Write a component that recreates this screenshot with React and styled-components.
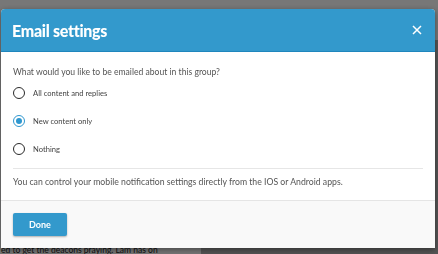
import React, { useState } from "react";
import styled, { createGlobalStyle } from "styled-components";

const GlobalStyle = createGlobalStyle`
  html, body {
    margin: 0;
    padding: 0;
    width: 438px;
    height: 254px;
    overflow: hidden;
  }
  body {
    font-family: Lato, "Liberation Sans", sans-serif;
  }
`;

const Page = styled.div`
  display: flex;
  flex-direction: column;
  width: 438px;
  height: 254px;
  background: #aaaaaa;
`;

const PageTop = styled.div`
  height: 40px;
  background: #eeeeee;
`;

const PageRow = styled.div`
  flex: 1;
  display: flex;
`;

const PageColumn = styled.div`
  width: 201px;
  background: #eeeeee;
  display: flex;
  flex-direction: column;
  justify-content: flex-end;
  overflow: hidden;
`;

const PageText = styled.p`
  margin: 0 0 0 1px;
  white-space: nowrap;
  font-size: 8.5px;
  line-height: 8px;
  color: #222;
`;

const Overlay = styled.div`
  position: fixed;
  inset: 0;
  background: rgba(0, 0, 0, 0.5);
`;

const Modal = styled.div`
  position: fixed;
  left: 1px;
  top: 9px;
  width: 434px;
  background: #fff;
  border-radius: 4px 4px 0 0;
  box-shadow: 0 2px 6px rgba(0, 0, 0, 0.4);
  overflow: hidden;
`;

const Header = styled.div`
  display: flex;
  align-items: center;
  justify-content: space-between;
  height: 42px;
  padding: 0 13px 0 11px;
  background: #3399cc;
  border-bottom: 1px solid #1f86bd;
`;

const Title = styled.h2`
  margin: 0;
  font-size: 16px;
  letter-spacing: -0.3px;
  font-weight: 900;
  color: #fff;
`;

const CloseButton = styled.button`
  display: flex;
  padding: 0;
  border: 0;
  background: none;
  cursor: pointer;
`;

const Body = styled.div`
  padding: 14px 12px 11px;
`;

const Question = styled.p`
  margin: 0;
  font-size: 8.6px;
  line-height: 13px;
  color: #555;
`;

const Options = styled.div`
  display: flex;
  flex-direction: column;
`;

const Option = styled.label`
  display: flex;
  align-items: center;
  gap: 8px;
  height: 28px;
  cursor: pointer;
`;

const RadioCircle = styled.span`
  box-sizing: border-box;
  display: flex;
  align-items: center;
  justify-content: center;
  width: 12px;
  height: 12px;
  border-radius: 50%;
  border: 1.6px solid ${(p) => (p.checked ? "#2f97cf" : "#2a2a2a")};

  &::after {
    content: "";
    width: 6px;
    height: 6px;
    border-radius: 50%;
    background: #2f97cf;
    display: ${(p) => (p.checked ? "block" : "none")};
  }
`;

const OptionLabel = styled.span`
  font-size: 7.6px;
  color: #444;
`;

const Divider = styled.hr`
  margin: 5px 0 6px;
  border: 0;
  border-top: 1px solid #e6e6e6;
`;

const Info = styled.p`
  margin: 0;
  font-size: 8.7px;
  line-height: 14px;
  color: #555;
`;

const Footer = styled.div`
  padding: 11px 12px 12px;
  background: #f9f9f9;
  border-top: 1px solid #e5e5e5;
`;

const DoneButton = styled.button`
  width: 54px;
  height: 23px;
  border: 0;
  border-radius: 2px;
  background: #3399cc;
  color: #fff;
  font-family: Lato, "Liberation Sans", sans-serif;
  font-size: 9px;
  font-weight: 700;
  box-shadow: 0 1px 2px rgba(0, 0, 0, 0.3);
  cursor: pointer;
`;

const options = [
  { id: "all", label: "All content and replies" },
  { id: "new", label: "New content only" },
  { id: "none", label: "Nothing" },
];

export default function App() {
  const [choice, setChoice] = useState("new");
  return (
    <>
      <GlobalStyle />
      <Page>
        <PageTop />
        <PageRow>
          <PageColumn>
            <PageText>ed to get the deacons praying. Lam has on</PageText>
          </PageColumn>
        </PageRow>
      </Page>
      <Overlay />
      <Modal>
        <Header>
          <Title>Email settings</Title>
          <CloseButton aria-label="Close">
            <svg width="10" height="10" viewBox="0 0 10 10">
              <path d="M1 1L9 9M9 1L1 9" stroke="#fff" strokeWidth="1.5" />
            </svg>
          </CloseButton>
        </Header>
        <Body>
          <Question>What would you like to be emailed about in this group?</Question>
          <Options>
            {options.map((o) => (
              <Option key={o.id} onClick={() => setChoice(o.id)}>
                <RadioCircle checked={choice === o.id} />
                <OptionLabel>{o.label}</OptionLabel>
              </Option>
            ))}
          </Options>
          <Divider />
          <Info>
            You can control your mobile notification settings directly from the IOS or Android apps.
          </Info>
        </Body>
        <Footer>
          <DoneButton>Done</DoneButton>
        </Footer>
      </Modal>
    </>
  );
}
